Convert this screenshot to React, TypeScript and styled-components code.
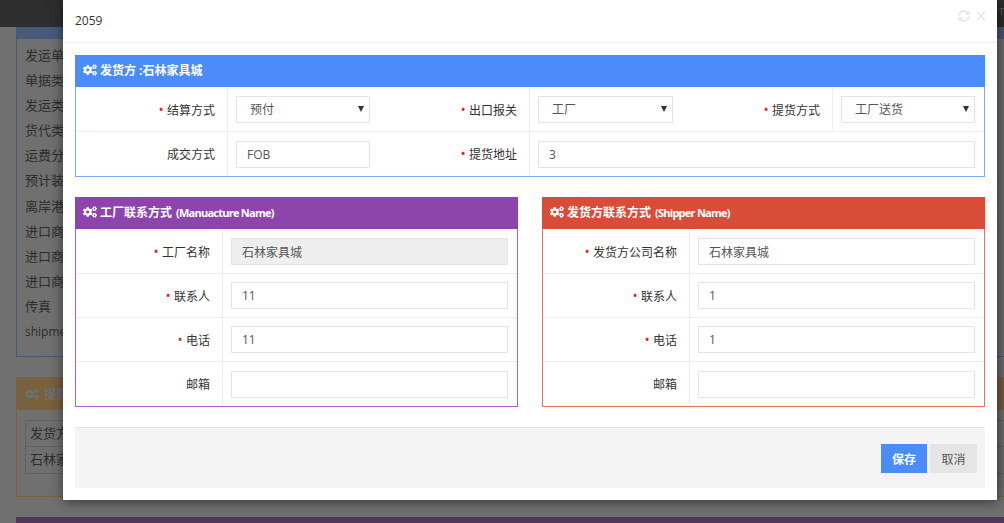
import { ReactNode } from "react";
import styled, { createGlobalStyle } from "styled-components";
import { FaCogs, FaSyncAlt } from "react-icons/fa";

const FONT = `"Open Sans", "Noto Sans CJK SC", sans-serif`;

const GlobalStyle = createGlobalStyle`
  html, body {
    margin: 0;
    padding: 0;
    width: 1004px;
    height: 523px;
    overflow: hidden;
    background: #bababa;
    font-family: ${FONT};
    font-size: 12px;
    color: #333;
  }
  * { box-sizing: border-box; }
`;

const Screen = styled.div`
  position: relative;
  width: 1004px;
  height: 523px;
  overflow: hidden;
`;

// the page behind the dialog
const TopBar = styled.div`
  height: 27px;
  background: #262626;
  color: #999;
  font-size: 9px;
  line-height: 24px;
  padding-left: 999px;
  white-space: nowrap;
`;

const PageBody = styled.div`
  display: flex;
  flex-direction: column;
  gap: 20px;
  padding-left: 16px;
  width: 1060px;
`;

const PagePanel = styled.section<{ $color: string; $height: number }>`
  height: ${(p) => p.$height}px;
  border: 1px solid ${(p) => p.$color};
  flex: none;
`;

const PagePanelHead = styled.div<{ $color: string; $height: number }>`
  height: ${(p) => p.$height}px;
  background: ${(p) => p.$color};
  color: #bababa;
  display: flex;
  align-items: center;
  gap: 5px;
  padding-left: 8px;
  font-weight: 700;
`;

const PageRows = styled.div`
  padding: 4px 8px 0;
`;

const PageRow = styled.div<{ $small?: boolean }>`
  height: 25.1px;
  line-height: 25px;
  font-size: ${(p) => (p.$small ? 12 : 13)}px;
  color: #222;
`;

const PageTable = styled.div`
  margin: 10px 8px 0;
  border: 1px solid #999;
`;

const PageCell = styled.div<{ $last?: boolean }>`
  height: 26px;
  line-height: 25px;
  padding-left: 4px;
  font-size: 13px;
  color: #222;
  border-bottom: ${(p) => (p.$last ? "none" : "1px solid #999")};
`;

const Shade = styled.div`
  position: absolute;
  inset: 0;
  background: rgba(54, 54, 54, 0.56);
`;

// the dialog
const Dialog = styled.div`
  position: absolute;
  left: 63px;
  top: 0;
  width: 934px;
  height: 500px;
  background: #fff;
  box-shadow: 1px 1px 12px rgba(0, 0, 0, 0.6);
`;

const DialogTitle = styled.div`
  height: 43px;
  padding: 0 12px 1px;
  display: flex;
  align-items: center;
  justify-content: space-between;
  border-bottom: 1px solid #eee;
  font-size: 12px;
  color: #333;
`;

const DialogTools = styled.div`
  display: flex;
  align-items: center;
  gap: 6px;
  margin: -9px -1px 0 0;
  color: #e6e6e6;
`;

const DialogBody = styled.div`
  padding: 12px 12px 0;
`;

const Panel = styled.section<{ $border: string }>`
  border: 1px solid ${(p) => p.$border};
  border-top: none;
`;

const PanelHead = styled.div<{ $color: string }>`
  height: 32px;
  margin: 0 -1px;
  background: ${(p) => p.$color};
  color: #fff;
  font-weight: 700;
  font-size: 12px;
  display: flex;
  align-items: center;
  gap: 3px;
  padding: 0 0 2px 8px;
`;

const Latin = styled.span`
  font-size: 11px;
  letter-spacing: -0.75px;
  margin-left: 1px;
`;

const GridTop = styled.div`
  display: grid;
  grid-template-columns: 152px 151px 151px 152px 151px 1fr;
  padding-top: 1px;
`;

const Label = styled.div<{ $last?: boolean }>`
  height: 44px;
  display: flex;
  align-items: center;
  justify-content: flex-end;
  padding-right: 12px;
  color: #333;
  border-right: 1px solid #eee;
  border-bottom: ${(p) => (p.$last ? "none" : "1px solid #eee")};
`;

const Star = styled.span`
  color: #ee2222;
  font-size: 10px;
  font-weight: 700;
  margin-right: 4px;
  line-height: 1;
  transform: translateY(-1px);
`;

const Field = styled.div<{ $span?: number; $last?: boolean }>`
  height: 44px;
  display: flex;
  align-items: center;
  padding: 0 9px 0 8px;
  grid-column: span ${(p) => p.$span || 1};
  border-bottom: ${(p) => (p.$last ? "none" : "1px solid #eee")};
`;

const Input = styled.input`
  width: 100%;
  height: 27px;
  border: 1px solid #e4e4e4;
  background: ${(p) => (p.readOnly ? "#eee" : "#fff")};
  padding: 0 10px;
  font: 12px ${FONT};
  color: #555;
  outline: none;
`;

const SelectBox = styled.div`
  position: relative;
  width: 100%;
  &::after {
    content: "";
    position: absolute;
    right: 6px;
    top: 10px;
    border-left: 3.5px solid transparent;
    border-right: 3.5px solid transparent;
    border-top: 6px solid #333;
  }
`;

const Select = styled.select`
  appearance: none;
  width: 100%;
  height: 27px;
  border: 1px solid #e4e4e4;
  background: #fff;
  padding: 0 13px;
  font: 12px ${FONT};
  color: #555;
  outline: none;
  border-radius: 0;
`;

const Columns = styled.div`
  display: grid;
  grid-template-columns: 443px 443px;
  justify-content: space-between;
  margin-top: 20px;
`;

const ContactGrid = styled.div`
  display: grid;
  grid-template-columns: 147px 1fr;
  padding-top: 1px;
`;

const Footer = styled.div`
  margin-top: 20px;
  height: 61px;
  background: #f4f4f4;
  border-top: 1px solid #e5e5e5;
  display: flex;
  justify-content: flex-end;
  align-items: flex-start;
  gap: 3px;
  padding: 16px 8px 0 0;
`;

const Button = styled.button<{ $primary?: boolean }>`
  height: 29px;
  width: ${(p) => (p.$primary ? 46 : 47)}px;
  border: none;
  padding: 0;
  background: ${(p) => (p.$primary ? "#4a8cf8" : "#e5e5e5")};
  color: ${(p) => (p.$primary ? "#fff" : "#555")};
  font: ${(p) => (p.$primary ? 700 : 400)} 12px ${FONT};
`;

const Close = () => (
  <svg width="10" height="10" viewBox="0 0 10 10" fill="none" stroke="currentColor" strokeWidth="1.4">
    <path d="M1 1l8 8M9 1l-8 8" />
  </svg>
);

const Req = ({ children, last, on }: { children: ReactNode; last?: boolean; on?: boolean }) => (
  <Label $last={last}>
    {on && <Star>•</Star>}
    {children}
  </Label>
);

function Contact({
  title,
  latin,
  color,
  border,
  rows,
}: {
  title: string;
  latin: string;
  color: string;
  border: string;
  rows: { label: string; value: string; required?: boolean; readOnly?: boolean }[];
}) {
  return (
    <Panel $border={border}>
      <PanelHead $color={color}>
        <FaCogs size={14} />
        {title}
        <Latin>{latin}</Latin>
      </PanelHead>
      <ContactGrid>
        {rows.map((r, i) => {
          const last = i === rows.length - 1;
          return [
            <Req key={r.label} on={r.required} last={last}>
              {r.label}
            </Req>,
            <Field key={r.label + "-v"} $last={last}>
              <Input defaultValue={r.value} readOnly={r.readOnly} />
            </Field>,
          ];
        })}
      </ContactGrid>
    </Panel>
  );
}

const pageLabels = [
  "发运单号",
  "单据类型",
  "发运类型",
  "货代类型",
  "运费分摊",
  "预计装柜",
  "离岸港口",
  "进口商名",
  "进口商地",
  "进口商税",
  "传真",
];

export default function App() {
  return (
    <Screen>
      <GlobalStyle />
      <TopBar>T</TopBar>
      <PageBody>
        <PagePanel $color="#5f83c4" $height={330}>
          <PagePanelHead $color="#5f8ad0" $height={11} />
          <PageRows>
            {pageLabels.map((l) => (
              <PageRow key={l}>{l}</PageRow>
            ))}
            <PageRow $small>shipment</PageRow>
          </PageRows>
        </PagePanel>
        <PagePanel $color="#cc9844" $height={120}>
          <PagePanelHead $color="#cc9844" $height={32}>
            <FaCogs size={14} />
            提货地址
          </PagePanelHead>
          <PageTable>
            <PageCell>发货方</PageCell>
            <PageCell $last>石林家具城</PageCell>
          </PageTable>
        </PagePanel>
        <PagePanel $color="#703a90" $height={40}>
          <PagePanelHead $color="#703a90" $height={32} />
        </PagePanel>
      </PageBody>
      <Shade />

      <Dialog>
        <DialogTitle>
          2059
          <DialogTools>
            <FaSyncAlt size={12} />
            <Close />
          </DialogTools>
        </DialogTitle>
        <DialogBody>
          <Panel $border="#7aa9f9">
            <PanelHead $color="#4a8cf8">
              <FaCogs size={14} />
              发货方 :石林家具城
            </PanelHead>
            <GridTop>
              <Req on>结算方式</Req>
              <Field>
                <SelectBox>
                  <Select defaultValue="预付">
                    <option>预付</option>
                  </Select>
                </SelectBox>
              </Field>
              <Req on>出口报关</Req>
              <Field>
                <SelectBox>
                  <Select defaultValue="工厂">
                    <option>工厂</option>
                  </Select>
                </SelectBox>
              </Field>
              <Req on>提货方式</Req>
              <Field>
                <SelectBox>
                  <Select defaultValue="工厂送货">
                    <option>工厂送货</option>
                  </Select>
                </SelectBox>
              </Field>
              <Req last>成交方式</Req>
              <Field $last>
                <Input defaultValue="FOB" />
              </Field>
              <Req on last>
                提货地址
              </Req>
              <Field $span={3} $last>
                <Input defaultValue="3" />
              </Field>
            </GridTop>
          </Panel>

          <Columns>
            <Contact
              title="工厂联系方式"
              latin="(Manuacture Name)"
              color="#8e44ad"
              border="#a862c8"
              rows={[
                { label: "工厂名称", value: "石林家具城", required: true, readOnly: true },
                { label: "联系人", value: "11", required: true },
                { label: "电话", value: "11", required: true },
                { label: "邮箱", value: "" },
              ]}
            />
            <Contact
              title="发货方联系方式"
              latin="(Shipper Name)"
              color="#d94c38"
              border="#ee7060"
              rows={[
                { label: "发货方公司名称", value: "石林家具城", required: true },
                { label: "联系人", value: "1", required: true },
                { label: "电话", value: "1", required: true },
                { label: "邮箱", value: "" },
              ]}
            />
          </Columns>

          <Footer>
            <Button $primary>保存</Button>
            <Button>取消</Button>
          </Footer>
        </DialogBody>
      </Dialog>
    </Screen>
  );
}
